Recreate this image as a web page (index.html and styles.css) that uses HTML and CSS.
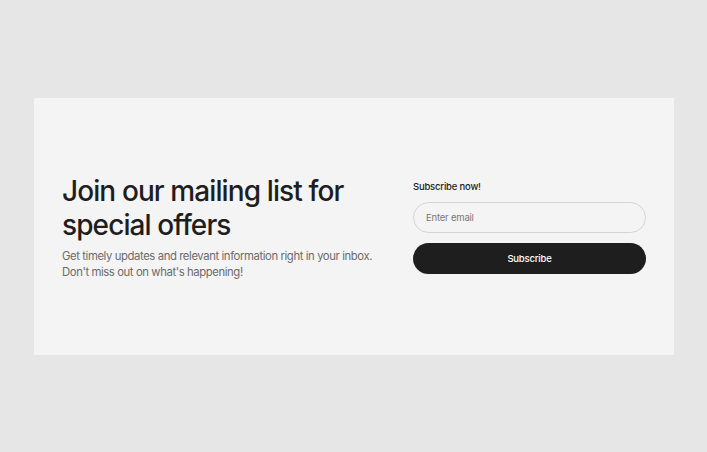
FILE: index.html
```html
<!DOCTYPE html>
<html lang="en">

<head>
    <meta charset="UTF-8">
    <meta name="viewport" content="width=device-width, initial-scale=1.0">
    <title>Newsletter</title>
    <link rel="stylesheet" href="styles.css">
</head>

<body>

    <section class="newsletter">
        <div class="newsletter-text">
            <h2>Join our mailing list for special offers</h2>
            <p>Get timely updates and relevant information right in your inbox. Don't miss out on what's happening!</p>
        </div>

        <form class="newsletter-form">
            <label for="email">Subscribe now!</label>
            <input type="email" id="email" name="email" placeholder="Enter email">
            <button type="submit">Subscribe</button>
        </form>
    </section>

</body>

</html>
```

FILE: styles.css
```css
html,
body {
    margin: 0;
    height: 100%;
    background-color: #e6e6e6;
    font-family: Inter, "Noto Sans", sans-serif;
}

body {
    padding: 98px 33px 0 34px;
    box-sizing: border-box;
}

.newsletter {
    background: #f4f4f4;
    height: 257px;
    box-sizing: border-box;
    padding: 0 28px;
    display: grid;
    grid-template-columns: 320px 1fr;
    column-gap: 31px;
    align-items: center;
}

h2 {
    margin: 0 0 6px;
    font-size: 28px;
    line-height: 34px;
    font-weight: 500;
    letter-spacing: -0.9px;
    color: #1e1e1e;
}

p {
    margin: 0;
    max-width: 312px;
    font-size: 11.3px;
    line-height: 16px;
    letter-spacing: -0.4px;
    color: #6b6b6b;
}

.newsletter-form {
    display: flex;
    flex-direction: column;
    padding-top: 2px;
}

label {
    font-size: 9.5px;
    font-weight: 500;
    color: #1e1e1e;
    letter-spacing: -0.2px;
    margin-bottom: 10px;
}

input,
button {
    height: 31px;
    box-sizing: border-box;
    border-radius: 16px;
    font-family: inherit;
    font-size: 9.5px;
    letter-spacing: -0.2px;
}

input {
    border: 1px solid #d4d4d4;
    background: #f4f4f4;
    padding: 0 12px;
    color: #1e1e1e;
}

input::placeholder {
    color: #777;
}

button {
    margin-top: 10px;
    border: none;
    background-color: #1e1e1e;
    color: #fff;
    font-weight: 500;
    cursor: pointer;
}
```
